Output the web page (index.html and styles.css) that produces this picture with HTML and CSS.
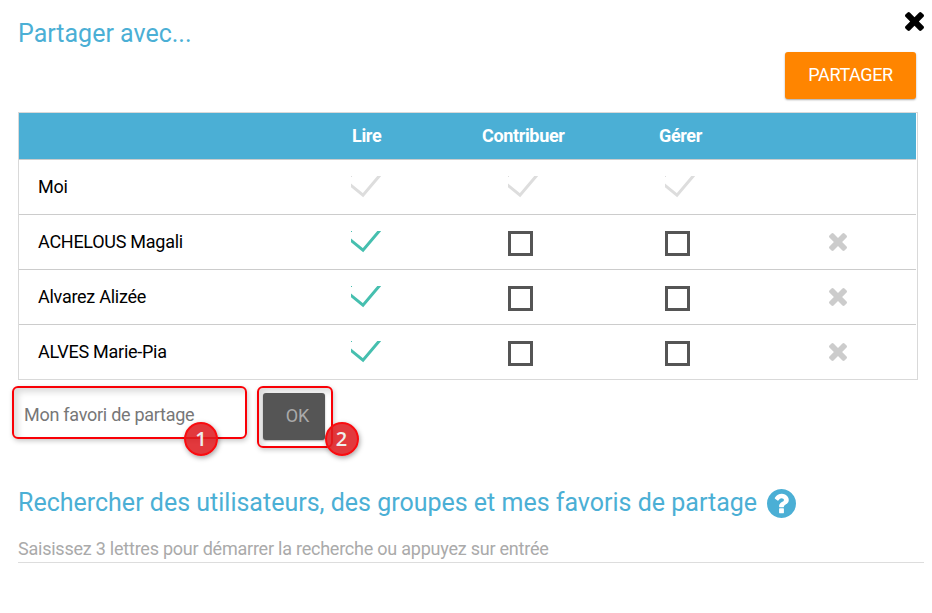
FILE: index.html
```html
<!DOCTYPE html>
<html lang="fr">
<head>
<meta charset="utf-8">
<title>Partager avec...</title>
<link rel="stylesheet" href="styles.css">
</head>
<body>
<svg class="defs" width="0" height="0" aria-hidden="true">
  <symbol id="times" viewBox="302 302 1188 1188"><path transform="translate(0 -64)" d="M1490 1322q0 40-28 68l-136 136q-28 28-68 28t-68-28l-294-294-294 294q-28 28-68 28t-68-28l-136-136q-28-28-28-68t28-68l294-294-294-294q-28-28-28-68t28-68l136-136q28-28 68-28t68 28l294 294 294-294q28-28 68-28t68 28l136 136q28 28 28 68t-28 68l-294 294 294 294q28 28 28 68z"/></symbol>
  <symbol id="check" viewBox="0 0 30 22"><path d="M-2 7.8L12 19.2L30.2-2.3" fill="none" stroke="currentColor" stroke-width="3"/><path d="M0 0h1v1H0z"/></symbol>
</svg>
<main class="panel">
  <header class="top">
    <h2 class="title">Partager avec...</h2>
    <button class="close" aria-label="Fermer"><svg><use href="#times"/></svg></button>
  </header>
  <div class="actions"><button class="share">PARTAGER</button></div>
  <div class="rights">
    <div class="row head"><span></span><span class="label read">Lire</span><span class="label contrib">Contribuer</span><span class="label manage">Gérer</span><span></span></div>
    <div class="row"><span class="name">Moi</span><svg class="check off"><use href="#check"/></svg><svg class="check off"><use href="#check"/></svg><svg class="check off"><use href="#check"/></svg><span></span></div>
    <div class="row"><span class="name">ACHELOUS Magali</span><svg class="check"><use href="#check"/></svg><i class="box"></i><i class="box"></i><svg class="remove"><use href="#times"/></svg></div>
    <div class="row"><span class="name">Alvarez Alizée</span><svg class="check"><use href="#check"/></svg><i class="box"></i><i class="box"></i><svg class="remove"><use href="#times"/></svg></div>
    <div class="row"><span class="name">ALVES Marie-Pia</span><svg class="check"><use href="#check"/></svg><i class="box"></i><i class="box"></i><svg class="remove"><use href="#times"/></svg></div>
  </div>
  <div class="favorite">
    <div class="frame field"><span class="placeholder">Mon favori de partage</span><b class="badge">1</b></div>
    <div class="frame confirm"><button class="ok">OK</button><b class="badge">2</b></div>
  </div>
  <div class="search-title">
    <h2 class="title search">Rechercher des utilisateurs, des groupes et mes favoris de partage</h2>
    <svg class="help" viewBox="128 128 1536 1536"><path d="M1024 1376v-192q0-14-9-23t-23-9h-192q-14 0-23 9t-9 23v192q0 14 9 23t23 9h192q14 0 23-9t9-23zm256-672q0-88-55.5-163t-138.5-116-170-41q-243 0-371 213-15 24 8 42l132 100q7 6 19 6 16 0 25-12 53-68 86-92 34-24 86-24 48 0 85.5 26t37.5 59q0 38-20 61t-68 45q-63 28-115.5 86.5t-52.5 125.5v36q0 14 9 23t23 9h192q14 0 23-9t9-23q0-19 21.5-49.5t54.5-49.5q32-18 49-28.5t46-35 44.5-48 28-60.5 12.5-81zm384 192q0 209-103 385.5t-279.5 279.5-385.5 103-385.5-103-279.5-279.5-103-385.5 103-385.5 279.5-279.5 385.5-103 385.5 103 279.5 279.5 103 385.5z"/></svg>
  </div>
  <div class="search-input">Saisissez 3 lettres pour démarrer la recherche ou appuyez sur entrée</div>
</main>
</body>
</html>
```
FILE: styles.css
```css
* { box-sizing: border-box; }
body { margin: 0; background: #fff; color: #000; font-family: Roboto, sans-serif; font-size: 18px; overflow: hidden; }
button { border: 0; padding: 0; font: inherit; }
svg { display: block; fill: currentColor; }
.defs { position: absolute; }
.panel { height: 613px; padding: 12px 8px 0 18px; }
.top { display: flex; justify-content: space-between; align-items: flex-start; height: 40px; }
.title { margin: 0; font-size: 25px; font-weight: 400; line-height: 30px; color: #4bafd5; white-space: nowrap; }
.top .title { margin-top: 7px; }
.close { background: none; color: #000; }
.close svg { width: 19px; height: 19px; }
.actions { display: flex; justify-content: flex-end; padding-right: 8px; height: 60px; }
.share { width: 131px; height: 47px; padding-bottom: 2px; border-radius: 3px; background: #ff8500; color: #fff; box-shadow: 0 1px 2px rgba(0,0,0,.35); letter-spacing: -.4px; }
.rights { width: 900px; border: 1px solid #d9d9d9; padding-right: 1px; }
.row { display: grid; grid-template-columns: 332px 157px 157px 164px 87px; height: 55px; border-bottom: 1px solid #ccc; }
.row:last-child { height: 54px; border-bottom: 0; }
.head { height: 47px; background: #4bafd5; color: #fff; font-weight: 700; }
.label { line-height: 46px; letter-spacing: -.35px; }
.read { margin-left: 1px; }
.contrib { margin-left: -26px; }
.manage { margin-left: -6px; }
.name { padding-left: 19px; line-height: 53px; letter-spacing: -.27px; }
.check { width: 30px; height: 22px; margin-top: 16px; color: #46bfaf; }
.off { color: #ddd; }
.box { width: 25px; height: 25px; margin-top: 16px; border: 3px solid #555; }
.remove { width: 18px; height: 18px; margin-top: 18px; color: #ccc; }
.favorite { display: flex; align-items: flex-start; gap: 10px; margin: 6px 0 0 -6px; height: 100px; }
.frame { position: relative; border: 2px solid #f90006; border-radius: 6px; box-shadow: 1px 2px 5px rgba(0,0,0,.22), inset 4px 4px 6px rgba(0,0,0,.14); }
.field { width: 235px; height: 53px; padding-left: 10px; line-height: 53px; color: #777; }
.placeholder { letter-spacing: -.27px; }
.confirm { width: 76px; height: 62px; padding: 5px 0 0 4px; }
.ok { display: block; width: 62px; height: 47px; padding: 0 0 2px 7px; border-radius: 3px; background: #555; color: #aaa; box-shadow: 0 1px 2px rgba(0,0,0,.35); }
.badge { position: absolute; width: 34px; height: 34px; border: 2px solid #f90c10; border-radius: 50%; background: rgba(222,28,32,.87); color: #eee; font: 600 20px/30px "Open Sans", sans-serif; text-align: center; box-shadow: 1px 2px 5px rgba(0,0,0,.35); }
.field .badge { left: 170px; top: 33.5px; }
.confirm .badge { left: 65.5px; top: 33.5px; }
.search-title { display: flex; align-items: center; height: 34px; }
.search { margin-top: -1px; }
.help { width: 29px; height: 29px; margin-left: 10px; color: #4bafd5; }
.search-input { width: 906px; height: 43px; padding-top: 15px; border-bottom: 1px solid #ddd; line-height: 28px; color: #aaa; letter-spacing: -.23px; }
```
